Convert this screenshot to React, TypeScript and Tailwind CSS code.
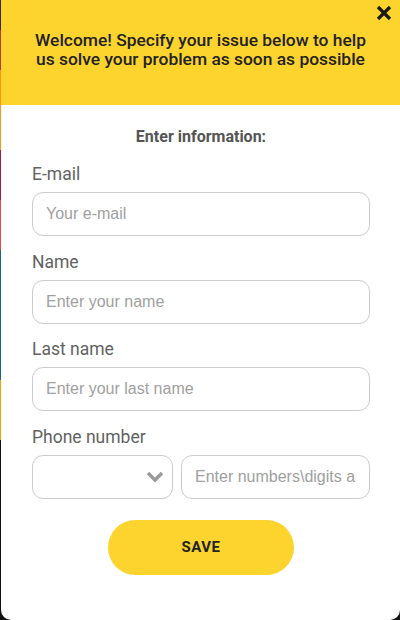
import { useState } from "react";

function Field({ label, placeholder }: { label: string; placeholder: string }) {
  return (
    <div className="flex flex-col">
      <label className="mb-[8px] text-[17.5px] leading-[20px] text-[#626262]">{label}</label>
      <input
        placeholder={placeholder}
        className="h-[44px] w-full rounded-[11px] border border-[#cccccc] px-[13px] font-['Liberation_Sans',Arial,sans-serif] text-[16px] text-[#333] outline-none placeholder:text-[#a0a0a0]"
      />
    </div>
  );
}

export default function App() {
  const [open, setOpen] = useState(true);

  return (
    <div
      className="flex h-[620px] w-[400px] bg-[#111]"
      style={{ fontFamily: "Roboto, 'Liberation Sans', sans-serif" }}
    >
      {/* strip of the page behind the modal */}
      <div className="flex w-[1px] flex-col">
        <div className="h-[30px] bg-[#3a2a1a]" />
        <div className="h-[40px] bg-[#c0392b]" />
        <div className="h-[80px] bg-[#f39c12]" />
        <div className="h-[50px] bg-[#b0154a]" />
        <div className="h-[50px] bg-[#e74c3c]" />
        <div className="h-[130px] bg-[#1f5f91]" />
        <div className="h-[60px] bg-[#f0a500]" />
        <div className="flex-1 bg-[#111]" />
      </div>

      {open && (
        <div className="flex h-full flex-1 flex-col overflow-hidden rounded-b-[10px] bg-white">
          <div className="relative flex h-[105px] shrink-0 items-center justify-center bg-[#fdd42d] px-[26px] pb-[5px]">
            <p className="text-center text-[17.4px] font-medium leading-[19px] text-[#222]">
              Welcome! Specify your issue below to help us solve your problem as soon as possible
            </p>
            <button
              onClick={() => setOpen(false)}
              className="absolute right-[6px] top-[3px] text-[#1a1a1a]"
            >
              <svg width="20" height="20" viewBox="0 0 20 20">
                <path d="M4 4 L16 16 M16 4 L4 16" stroke="currentColor" strokeWidth="3.2" />
              </svg>
            </button>
          </div>

          <div className="flex flex-1 flex-col pl-[31px] pr-[30px]">
            <p className="mt-[22px] mb-[17px] text-center text-[16px] font-bold leading-[20px] text-[#555]">
              Enter information:
            </p>

            <div className="flex flex-col gap-[15.7px]">
              <Field label="E-mail" placeholder="Your e-mail" />
              <Field label="Name" placeholder="Enter your name" />
              <Field label="Last name" placeholder="Enter your last name" />

              <div className="flex flex-col">
                <label className="mb-[8px] text-[17.5px] leading-[20px] text-[#626262]">Phone number</label>
                <div className="flex gap-[8px]">
                  <div className="relative h-[44px] w-[141px] rounded-[11px] border border-[#cccccc]">
                    <svg
                      className="absolute right-[8px] top-[14px] text-[#999]"
                      width="18"
                      height="14"
                      viewBox="0 0 18 14"
                    >
                      <path d="M2 3 L9 10 L16 3" stroke="currentColor" strokeWidth="3.4" fill="none" />
                    </svg>
                  </div>
                  <input
                    placeholder="Enter numbers\digits and"
                    className="h-[44px] min-w-0 flex-1 rounded-[11px] border border-[#cccccc] px-[13px] font-['Liberation_Sans',Arial,sans-serif] text-[16px] outline-none placeholder:text-[#a0a0a0]"
                  />
                </div>
              </div>
            </div>

            <div className="mt-[21px] flex justify-center">
              <button className="h-[55px] w-[186px] rounded-full bg-[#fdd42d] text-[15px] font-bold tracking-[0.5px] text-[#222]">
                SAVE
              </button>
            </div>
          </div>
        </div>
      )}
    </div>
  );
}
